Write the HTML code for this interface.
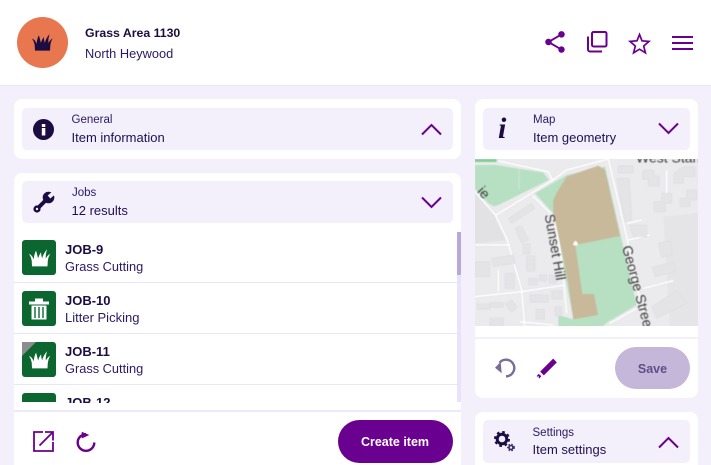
<!DOCTYPE html>
<html><head><meta charset="utf-8"><style>
html,body{margin:0;padding:0;width:711px;height:465px;overflow:hidden}
#p{width:711px;height:465px;overflow:hidden;background:#f3f0fc;position:relative;font-family:"Liberation Sans",sans-serif;color:#2b1a63}
.a{position:absolute}
.card{position:absolute;background:#fff;border-radius:8px}
.in{position:absolute;background:#f3effb;border-radius:5px}
.t{position:absolute;white-space:nowrap;font-size:13px;line-height:16px}
.b{font-weight:700;color:#1b0d42}
.s{font-size:11.5px}
.tile{position:absolute;left:22px;width:34px;height:35px;background:#0b6630;border-radius:3px}
.hr{position:absolute;left:14px;width:443px;height:1px;background:#e9e5fb}
svg{position:absolute;overflow:visible}
</style></head><body><div id="p">
<svg width="0" height="0" style="position:absolute"><defs>
<symbol id="grass" viewBox="0 0 64 52"><path d="M9 51L8 33Q6 22 0 14Q9 17 13 28L14 30Q15 15 21 4Q24 15 27 27Q30 17 36 9Q36 18 39 27Q43 12 54 0Q49 14 50 27Q55 18 63 13Q57 24 56 34L55 51Z"/></symbol>
</defs></svg>

<div class="a" style="left:0;top:0;width:711px;height:85px;background:#fff;border-bottom:1px solid #e9e5f8"></div>
<div class="a" style="left:17px;top:17px;width:51px;height:51px;border-radius:50%;background:#e8774f"></div>
<svg style="left:32px;top:34px" width="21" height="17" fill="#1b0d42"><use href="#grass" width="21" height="17"/></svg>
<div class="t b" style="left:85px;top:25px;font-size:12.3px">Grass Area 1130</div>
<div class="t" style="left:85px;top:46px;font-size:12.800px">North Heywood</div>

<svg style="left:542px;top:29px" width="26" height="26" viewBox="0 0 24 24" fill="#6a008f"><path d="M18 16.08c-.76 0-1.44.3-1.96.77L8.91 12.7c.05-.23.09-.46.09-.7s-.04-.47-.09-.7l7.05-4.11c.54.5 1.25.81 2.04.81 1.66 0 3-1.34 3-3s-1.34-3-3-3-3 1.34-3 3c0 .24.04.47.09.7L8.04 9.81C7.5 9.31 6.79 9 6 9c-1.66 0-3 1.34-3 3s1.34 3 3 3c.79 0 1.5-.31 2.04-.81l7.12 4.16c-.05.21-.08.43-.08.65 0 1.61 1.31 2.92 2.92 2.92 1.61 0 2.92-1.31 2.92-2.92s-1.31-2.92-2.92-2.92z"/></svg>
<svg style="left:586px;top:31px" width="22" height="22" fill="none" stroke="#6a008f" stroke-width="2"><rect x="6" y="1" width="14.500" height="14.500" rx="1.500"/><path d="M2 5.500V18.500a2 2 0 0 0 2 2H16"/></svg>
<svg style="left:629px;top:33px" width="21" height="21" fill="none" stroke="#6a008f" stroke-width="1.700"><path d="M10.500 1.500L13 7.800L20 8.400L14.700 13L16.400 19.800L10.500 16.200L4.600 19.800L6.300 13L1 8.400L8 7.800Z"/></svg>
<svg style="left:672px;top:35.500px" width="21" height="15" fill="#6a008f"><rect width="21" height="2"/><rect y="6" width="21" height="2"/><rect y="12" width="21" height="2"/></svg>

<div class="card" style="left:14px;top:99px;width:447px;height:60px"></div>
<div class="in" style="left:22px;top:108px;width:431px;height:42px"></div>
<svg style="left:33px;top:119px" width="21" height="21"><circle cx="10.500" cy="10.500" r="10.500" fill="#1b0d42"/><rect x="8.800" y="9" width="3.500" height="7.500" fill="#fff"/><rect x="8.800" y="5" width="3.500" height="3" fill="#fff"/></svg>
<div class="t s" style="left:71.500px;top:112px">General</div>
<div class="t" style="left:71.500px;top:130px;color:#1f1150">Item information</div>
<svg style="left:421px;top:123px" width="21" height="13" fill="none" stroke="#6a008f" stroke-width="2"><path d="M1 11.500L10.500 2L20 11.500"/></svg>

<div class="card" style="left:14px;top:173px;width:447px;height:292px;border-radius:8px 8px 0 0"></div>
<div class="in" style="left:22px;top:181px;width:431px;height:42px"></div>
<svg style="left:32px;top:191px" width="24" height="24" fill="none" stroke="#1b0d42"><circle cx="5" cy="18" r="2.400" stroke-width="2.400"/><path d="M6.500 16.500L15 8" stroke-width="4"/><circle cx="16.500" cy="6.500" r="5.800" fill="#1b0d42" stroke="none"/><path d="M17 6L24 0" stroke="#f3effb" stroke-width="4"/></svg>
<div class="t s" style="left:72px;top:185px">Jobs</div>
<div class="t" style="left:71.500px;top:203px;color:#1f1150">12 results</div>
<svg style="left:421px;top:196px" width="21" height="13" fill="none" stroke="#6a008f" stroke-width="2"><path d="M1 1.500L10.500 11L20 1.500"/></svg>

<div class="tile" style="top:240px"></div>
<svg style="left:28.500px;top:249px" width="21.500" height="18" fill="#fff"><use href="#grass" width="21.500" height="18"/></svg>
<div class="t b" style="left:65px;top:242px">JOB-9</div>
<div class="t" style="left:65px;top:259px;font-size:12.800px">Grass Cutting</div>
<div class="hr" style="top:282px"></div>

<div class="tile" style="top:291px"></div>
<svg style="left:29px;top:298px" width="20" height="22" fill="#fff"><rect y="3.500" width="20" height="3"/><rect x="6" y="0.500" width="8" height="3"/><path d="M2.500 7.500H17.500V21.500H2.500Z"/><g fill="#0b6630"><rect x="5.300" y="9" width="1.400" height="11"/><rect x="9.300" y="9" width="1.400" height="11"/><rect x="13.300" y="9" width="1.400" height="11"/></g></svg>
<div class="t b" style="left:65px;top:293px">JOB-10</div>
<div class="t" style="left:65px;top:310px">Litter Picking</div>
<div class="hr" style="top:333px"></div>

<div class="tile" style="top:342px"></div>
<svg style="left:22px;top:342px" width="14" height="14"><path d="M0 0H14L0 14Z" fill="#8c8c8c"/></svg>
<svg style="left:28.500px;top:351px" width="21.500" height="18" fill="#fff"><use href="#grass" width="21.500" height="18"/></svg>
<div class="t b" style="left:65px;top:344px">JOB-11</div>
<div class="t" style="left:65px;top:361px;font-size:12.800px">Grass Cutting</div>
<div class="hr" style="top:384px"></div>

<div class="tile" style="top:393px;height:9px;border-radius:3px 3px 0 0"></div>
<div class="a" style="left:65px;top:393px;width:60px;height:9.500px;overflow:hidden"><div class="t b" style="left:0;top:2px">JOB-12</div></div>

<div class="a" style="left:457px;top:232px;width:4px;height:170px;background:#e8e3fa"></div>
<div class="a" style="left:457px;top:232px;width:4px;height:43px;background:#b9a9d6"></div>

<div class="a" style="left:14px;top:410px;width:447px;height:1.500px;background:#ede9fa"></div>

<svg style="left:33px;top:431px" width="21" height="21" fill="none" stroke="#6a008f" stroke-width="1.800"><path d="M10 1H1V20H20V11"/><path d="M6.500 14.500L19.500 1.500M12 1H20V9.500"/></svg>
<svg style="left:76px;top:431px" width="20" height="22" fill="none" stroke="#6a008f" stroke-width="2.400"><path d="M18.300 11.500A8.300 8.300 0 1 1 10 3.200"/><path d="M5.700 0.700L13.300 4L5.700 7.500Z" stroke="none" fill="#6a008f"/></svg>
<div class="a" style="left:337.500px;top:420px;width:115px;height:43px;border-radius:22px;background:#6a008f"></div>
<div class="t" style="left:337.500px;top:434px;width:115px;text-align:center;color:#fff;font-weight:700;font-size:12.500px">Create item</div>

<div class="card" style="left:475px;top:99px;width:223px;height:299px"></div>
<div class="in" style="left:483px;top:108px;width:207px;height:42px"></div>
<div class="a" style="left:498px;top:114px;font-family:'Liberation Serif',serif;font-style:italic;font-weight:700;font-size:30px;line-height:30px;color:#1b0d42">i</div>
<div class="t s" style="left:533px;top:112px">Map</div>
<div class="t" style="left:533px;top:130px;color:#1f1150">Item geometry</div>
<svg style="left:658px;top:122px" width="21" height="13" fill="none" stroke="#6a008f" stroke-width="2"><path d="M1 1.500L10.500 11L20 1.500"/></svg>

<div class="a" style="left:474.700px;top:159px;width:223.300px;height:167px;overflow:hidden">
<svg style="left:-4.700px;top:-9px;filter:blur(0.45px)" width="241" height="180" viewBox="0 0 723 540">
<rect x="0" y="0" width="723" height="540" fill="#ebebee"/>
<path d="M14 125L77 196L112 271L14 280Z" fill="#e2e2e5"/>
<path d="M580 200L723 185V540H600Z" fill="#e5e5e8"/>
<path d="M14 45H80L220 68L237 90L85 165L72 169L55 160L14 115Z" fill="#b7e0c2"/>
<path d="M147 55V120" stroke="#cfe4d6" stroke-width="3"/>
<path d="M0 27H80V36H0Z" fill="#7fcf95"/>
<path d="M195 130L290 75L405 50L500 465L415 515L385 540H265V495L310 508L250 190Z" fill="#b7e0c2"/>
<g fill="none" stroke="#dadadd" stroke-width="8">
<path d="M85 33L235 65L247 91L77 196"/><path d="M247 91L290 60L415 27"/>
<path d="M415 27L470 260L497 400L535 540"/>
<path d="M12 121L77 196L112 271L155 420L165 540"/>
<path d="M187 136L252 201L275 330L290 490"/>
<path d="M14 440L155 425L285 405"/><path d="M14 285L120 285"/><path d="M520 415L610 392"/>
<path d="M470 220L515 210"/><path d="M475 270L540 255"/><path d="M420 520L500 475"/><path d="M150 515L250 525"/>
<path d="M590 60V130"/><path d="M85 360V425"/>
</g>
<g fill="none" stroke="#fff" stroke-width="5.500">
<path d="M85 33L235 65L247 91L77 196"/><path d="M247 91L290 60L415 27"/>
<path d="M415 27L470 260L497 400L535 540"/>
<path d="M12 121L77 196L112 271L155 420L165 540"/>
<path d="M187 136L252 201L275 330L290 490"/>
<path d="M14 440L155 425L285 405"/><path d="M14 285L120 285"/><path d="M520 415L610 392"/>
<path d="M470 220L515 210"/><path d="M475 270L540 255"/><path d="M420 520L500 475"/><path d="M150 515L250 525"/>
<path d="M590 60V130"/><path d="M85 360V425"/>
</g>
<g fill="#e4e4e7" stroke="#dadadd" stroke-width="1.500">
<rect x="445" y="47" width="45" height="22"/><path d="M518 60H552V78H568V108H535V88H518Z"/><path d="M612 70L640 50H675V80H640V100H612Z"/>
<path d="M440 85L478 85L485 210L465 215Z"/><path d="M552 155H575V130H605V160H585V185H552Z"/><path d="M630 145H650V120H680V150H660V170H630Z"/>
<path d="M478 225H530V260H490Z"/><path d="M565 280L600 272L608 315L575 322Z"/><path d="M548 350L612 338L618 365L555 380Z"/><path d="M545 470L620 422L650 460L560 505Z"/>
<path d="M115 205L185 160L195 175L125 220Z"/><path d="M135 235L155 228L175 270L155 280Z"/><rect x="160" y="282" width="20" height="30"/><rect x="170" y="318" width="25" height="45"/>
<path d="M65 325L130 315L135 340L70 350Z"/><rect x="14" y="335" width="45" height="45"/><rect x="105" y="370" width="28" height="45"/><rect x="176" y="385" width="25" height="20"/><rect x="208" y="375" width="22" height="18"/><rect x="238" y="375" width="20" height="25"/>
<rect x="180" y="435" width="55" height="22"/><rect x="245" y="422" width="30" height="25"/><rect x="198" y="478" width="25" height="30"/><rect x="255" y="470" width="20" height="28"/>
<path d="M22 462H60V478H22Z"/><path d="M60 458H100V472H60Z"/><path d="M105 462L125 450L142 472L125 487Z"/><rect x="60" y="505" width="40" height="23"/>
</g>
<path d="M290 80L385 47L405 60L450 258L316 285L337 432L372 432L384 495L310 508L295 400L275 300L250 190L250 150L262 125Z" fill="#c8b99a"/>
<path d="M310 280L316 272L323 278L323 286H310Z" fill="#fff"/>
<text transform="translate(224,195) rotate(80)" font-size="42" fill="#3a3a3a">Sunset Hill</text>
<text transform="translate(456,291) rotate(75)" font-size="42" fill="#3a3a3a">George Street</text>
<text x="498" y="38" font-size="42" fill="#3a3a3a">West Stan</text>
<text transform="translate(20,125) rotate(48)" font-size="42" fill="#3a3a3a">ie</text>
</svg></div>

<div class="a" style="left:475px;top:337px;width:223px;height:2px;background:#f3f0fc"></div>
<svg style="left:493px;top:356px" width="23" height="23" fill="none" stroke="#7a6c98" stroke-width="2.400"><path d="M6.500 6.800A8.300 8.300 0 1 1 13 20.300"/><path d="M2 11.700L7.700 5.700L8.700 17.300Z" stroke="none" fill="#7a6c98"/></svg>
<svg style="left:536px;top:358px" width="22" height="21" fill="none" stroke="#6a008f"><path d="M19 2.500L6 15.500" stroke-width="5.200"/><path d="M4 17L2 19.300" stroke-width="3.600"/><circle cx="2.200" cy="19" r="0.700" fill="#fff" stroke="none"/></svg>
<div class="a" style="left:615px;top:347px;width:75px;height:42px;border-radius:21px;background:#c5b7da"></div>
<div class="t" style="left:615px;top:361px;width:75px;text-align:center;color:#5f4f87;font-weight:700;font-size:12.500px">Save</div>

<div class="card" style="left:475px;top:412px;width:223px;height:53px;border-radius:8px 8px 0 0"></div>
<div class="in" style="left:483px;top:420px;width:207px;height:43px"></div>
<svg style="left:494px;top:431px" width="22" height="21" fill="none"><circle cx="8" cy="8" r="4.800" stroke="#1b0d42" stroke-width="3"/><circle cx="8" cy="8" r="6.500" stroke="#1b0d42" stroke-width="3" stroke-dasharray="2.500 2.600"/><circle cx="17" cy="16.500" r="2" stroke="#3a2a66" stroke-width="1.600"/><circle cx="17" cy="16.500" r="3.200" stroke="#3a2a66" stroke-width="1.400" stroke-dasharray="1.500 1.500"/></svg>
<div class="t s" style="left:532.500px;top:425px">Settings</div>
<div class="t" style="left:532.500px;top:442px;color:#1f1150">Item settings</div>
<svg style="left:658px;top:436px" width="21" height="13" fill="none" stroke="#6a008f" stroke-width="2"><path d="M1 11.500L10.500 2L20 11.500"/></svg>
</div></body></html>
